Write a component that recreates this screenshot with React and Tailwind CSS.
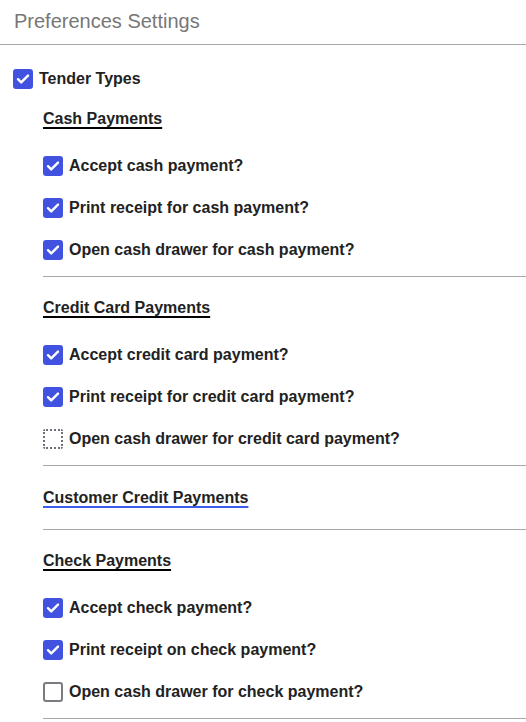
import React, { useState } from 'react';

const sections = [
  {
    title: 'Cash Payments',
    link: false,
    items: [
      { label: 'Accept cash payment?', checked: true },
      { label: 'Print receipt for cash payment?', checked: true },
      { label: 'Open cash drawer for cash payment?', checked: true },
    ],
  },
  {
    title: 'Credit Card Payments',
    link: false,
    items: [
      { label: 'Accept credit card payment?', checked: true },
      { label: 'Print receipt for credit card payment?', checked: true },
      { label: 'Open cash drawer for credit card payment?', checked: false, focused: true },
    ],
  },
  {
    title: 'Customer Credit Payments',
    link: true,
    items: [],
  },
  {
    title: 'Check Payments',
    link: false,
    items: [
      { label: 'Accept check payment?', checked: true },
      { label: 'Print receipt on check payment?', checked: true },
      { label: 'Open cash drawer for check payment?', checked: false },
    ],
  },
];

function Box({ checked, focused, onClick }) {
  if (checked) {
    return (
      <span onClick={onClick} className="flex h-5 w-5 shrink-0 cursor-pointer items-center justify-center rounded-[3px] bg-[#4252e0]">
        <svg viewBox="0 0 20 20" className="h-5 w-5" fill="none">
          <path d="M5 10.2l3.2 3.2L15 6.6" stroke="white" strokeWidth="2.4" strokeLinecap="round" strokeLinejoin="round" />
        </svg>
      </span>
    );
  }
  return (
    <span
      onClick={onClick}
      className={
        focused
          ? 'h-5 w-5 shrink-0 cursor-pointer rounded-[2px] border-2 border-dotted border-[#6f6f7a] bg-white'
          : 'h-5 w-5 shrink-0 cursor-pointer rounded-[3px] border-2 border-[#7a7a80] bg-white'
      }
    />
  );
}

export default function App() {
  const [tender, setTender] = useState(true);
  const [data, setData] = useState(sections);

  const toggle = (si, ii) => {
    setData(data.map((s, a) => a !== si ? s : {
      ...s,
      items: s.items.map((it, b) => b !== ii ? it : { ...it, checked: !it.checked }),
    }));
  };

  const sectionPad = (s, si) => {
    if (si === 0) return '';
    return s.items.length ? 'pt-[21px]' : 'pt-[22px]';
  };

  return (
    <div className="min-h-screen w-[526px] bg-white font-['Liberation_Sans',Arial,sans-serif] text-[#222]">
      <div className="border-b border-[#a8a8a8] pb-[10px] pl-[14px] pt-[9px]">
        <h1 className="text-[20px] leading-[25px] text-[#777]">Preferences Settings</h1>
      </div>

      <div className="flex items-center gap-[6px] pl-[13px] pt-[24px]">
        <Box checked={tender} onClick={() => setTender(!tender)} />
        <span className="text-[16px] font-bold leading-5">Tender Types</span>
      </div>

      <div className="pl-[43px] pt-[20px]">
        {data.map((s, si) => (
          <div key={s.title} className={'border-b border-[#a8a8a8] ' + sectionPad(s, si)}>
            <div className={'text-[16px] leading-5 ' + (s.items.length ? 'pb-[27px]' : 'pb-[21px]')}>
              <span
                className={
                  'font-bold underline decoration-2 underline-offset-[3px] ' +
                  (s.link ? 'decoration-[#3a5cf0]' : 'decoration-black')
                }
              >
                {s.title}
              </span>
            </div>
            {s.items.length > 0 && (
              <div className="flex flex-col gap-[22px] pb-[16px]">
                {s.items.map((it, ii) => (
                  <label key={it.label} className="flex items-center gap-[6px]">
                    <Box checked={it.checked} focused={it.focused} onClick={() => toggle(si, ii)} />
                    <span className="text-[16px] font-bold leading-5">{it.label}</span>
                  </label>
                ))}
              </div>
            )}
          </div>
        ))}
      </div>
    </div>
  );
}
